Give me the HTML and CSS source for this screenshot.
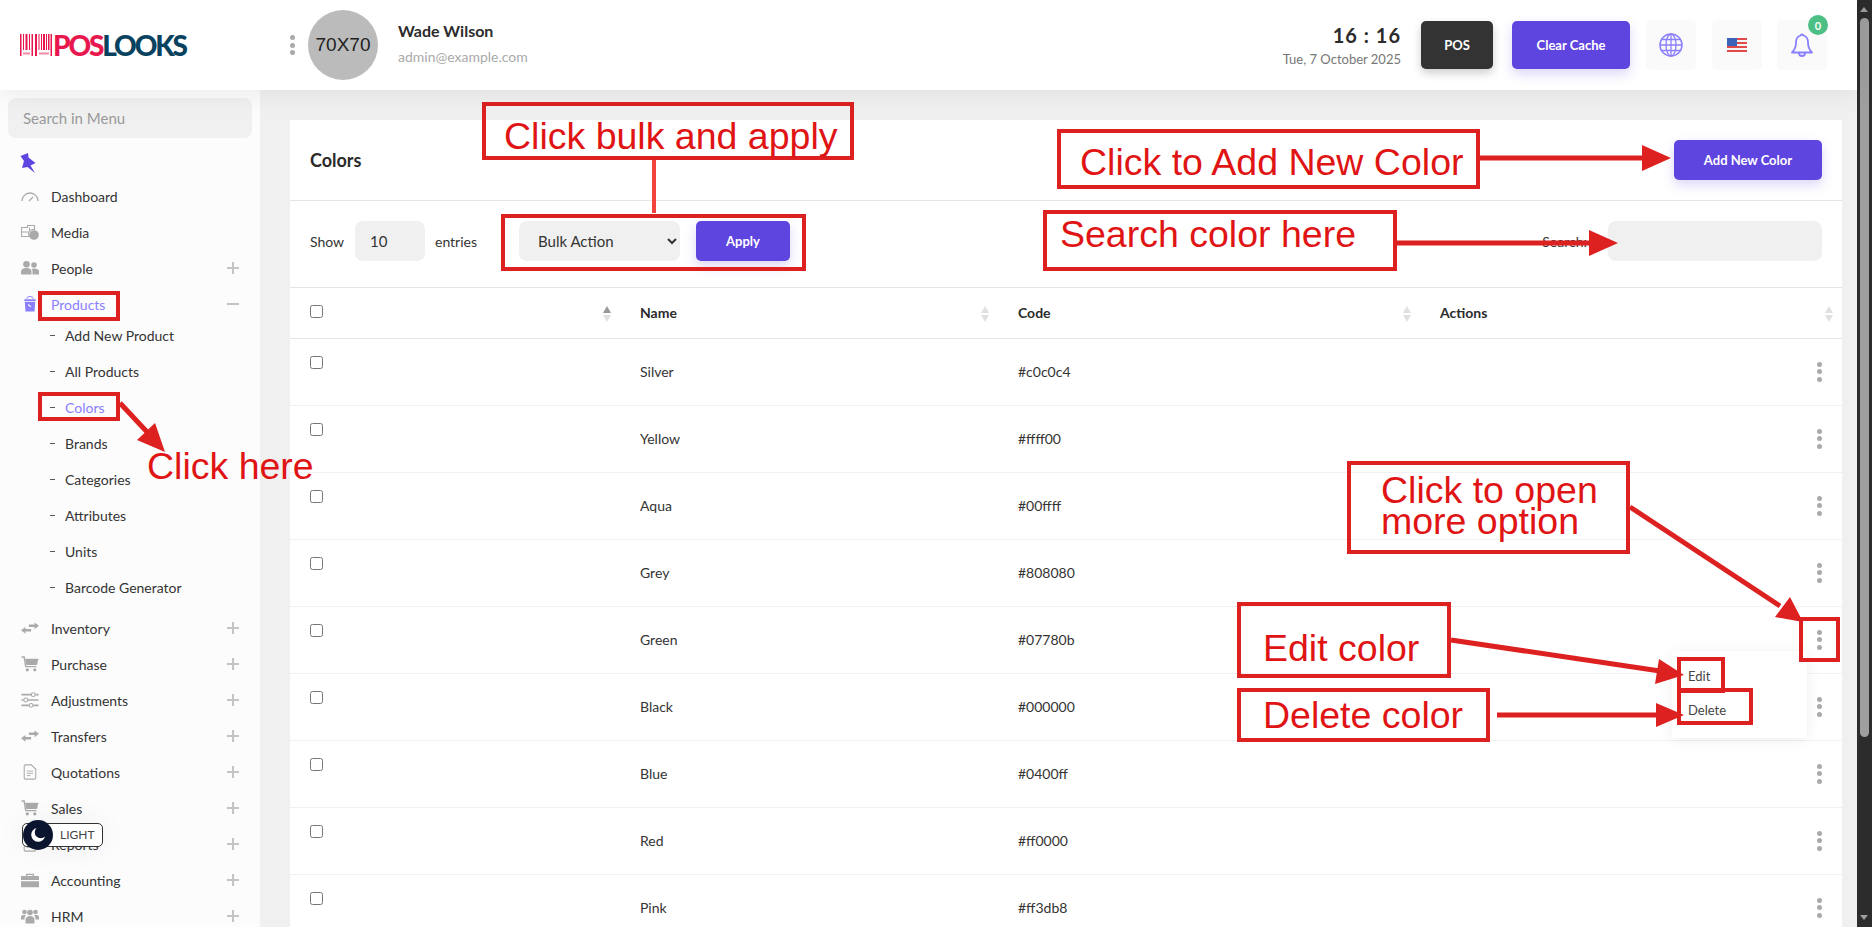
FILE: index.html
```html
<!DOCTYPE html>
<html lang="en">
<head>
<meta charset="utf-8">
<title>Colors</title>
<link rel="stylesheet" href="styles.css">
</head>
<body>
<svg class="defs" width="0" height="0" aria-hidden="true">
  <symbol id="i-gauge" viewBox="0 0 18 12"><path d="M1 11a8 8 0 0 1 16 0" fill="none" stroke="currentColor" stroke-width="1.300"/><path d="M8 11l4-4" stroke="currentColor" stroke-width="1.300"/></symbol>
  <symbol id="i-media" viewBox="0 0 18 16"><path d="M.5 3.500h6V1.500h7v4h-2.500a4 4 0 0 0-2 7H.5z" fill="none" stroke="currentColor" stroke-width="1.100"/><path d="M.5 8h7M8.500 3.500v3" stroke="currentColor"/><circle cx="13" cy="11" r="4.800" fill="currentColor"/></symbol>
  <symbol id="i-people" viewBox="0 0 18 15"><circle cx="5.500" cy="3.800" r="3.300" fill="currentColor"/><path d="M0 14v-3c0-2 2-3.500 5.500-3.500S10.500 9 10.500 11v3z" fill="currentColor"/><circle cx="13" cy="4.500" r="2.800" fill="currentColor"/><path d="M11.500 14v-3.500c0-.8-.5-1.500-1-2 2-1 7.500-.8 7.500 2.500v3z" fill="currentColor"/></symbol>
  <symbol id="i-bucket" viewBox="0 0 13 17"><path d="M3 3a3.500 2.500 0 0 1 7 0" fill="none" stroke="currentColor"/><path d="M.5 3.500h12v2H.5zM1 6.500h11l-.7 10H1.700z" fill="currentColor"/><path d="M4.500 9l3 2.500" stroke="#fff" stroke-width="1.200"/></symbol>
  <symbol id="i-swap" viewBox="0 0 16 11"><path d="M0 7.500L4 4.500V6.300H9V8.700H4V10.500z" fill="currentColor"/><path d="M16 3.500L12 .5V2.300H7V4.700H12V6.500z" fill="currentColor"/></symbol>
  <symbol id="i-cart" viewBox="0 0 16 15"><path d="M0 1h2.500l1.500 9h10" fill="none" stroke="currentColor" stroke-width="1.300"/><path d="M3.500 2.500H16l-1.500 6H4.500z" fill="currentColor"/><circle cx="5.500" cy="13" r="1.500" fill="currentColor"/><circle cx="12.500" cy="13" r="1.500" fill="currentColor"/></symbol>
  <symbol id="i-sliders" viewBox="0 0 16 15"><path d="M0 2.500h9M13 2.500h3M0 7.500h2M6 7.500h10M0 12.500h7M11 12.500h5" stroke="currentColor" stroke-width="1.500"/><circle cx="11" cy="2.500" r="1.800" fill="none" stroke="currentColor"/><circle cx="4" cy="7.500" r="1.800" fill="none" stroke="currentColor"/><circle cx="9" cy="12.500" r="1.800" fill="none" stroke="currentColor"/></symbol>
  <symbol id="i-file" viewBox="0 0 15 18"><path d="M1 2.500A1.500 1.500 0 0 1 2.500 1H9l5 5v9.500a1.500 1.500 0 0 1-1.500 1.500h-10A1.500 1.500 0 0 1 1 15.500z" fill="none" stroke="currentColor" stroke-width="1.200"/><path d="M4 8h7M4 10.500h7M4 13h4" stroke="currentColor" stroke-width="1"/></symbol>
  <symbol id="i-case" viewBox="0 0 16 13"><path d="M5 3V1.500h6V3" fill="none" stroke="currentColor" stroke-width="1.200"/><path d="M0 3h16v3.500H0zM0 7.500h16V13H0z" fill="currentColor"/></symbol>
  <symbol id="i-group" viewBox="0 0 18 15"><circle cx="9" cy="4" r="2.800" fill="currentColor"/><circle cx="3.500" cy="3.500" r="2.300" fill="currentColor"/><circle cx="14.500" cy="3.500" r="2.300" fill="currentColor"/><path d="M4.500 15v-3.500C4.500 9 6.500 7.500 9 7.500s4.500 1.500 4.500 4V15z" fill="currentColor"/><path d="M0 11V8.500C0 7 1.500 6.500 3.500 6.500c.5 0 1 0 1.300.2C3.800 8 3.500 9.500 3.500 11zM18 11V8.500c0-1.500-1.500-2-3.500-2-.5 0-1 0-1.300.2 1 1.300 1.300 2.800 1.300 4.300z" fill="currentColor"/></symbol>
</svg>

<div class="app">
  <div class="page">
    <header class="topbar">
      <div class="logo">
        <svg class="logo-bars" viewBox="0 0 32 22" aria-hidden="true">
          <path d="M0 0h1.500v22H0zM3 0h1v16H3zM5.500 0h2v16h-2zM9 0h1v16H9zM11.500 0h1.500v22h-1.500zM15 0h2v22h-2zM18.500 0h1v16h-1zM21 0h1v16h-1zM23 0h2v16h-2zM26 0h1v16h-1zM28 0h1.500v16H28zM30.500 0h1.500v22h-1.500z" fill="#e8184f"/>
          <path d="M3 18.500h7v2H3zM19 18.500h10v2H19z" fill="#f08aa6"/>
        </svg>
        <span class="logo-pos">POS</span><span class="logo-looks">LOOKS</span>
      </div>
      <button class="kebab topbar-kebab" aria-label="Menu"><i></i><i></i><i></i></button>
      <div class="avatar">70X70</div>
      <div class="user">
        <div class="user-name">Wade Wilson</div>
        <div class="user-mail">admin@example.com</div>
      </div>
      <div class="clock">
        <div class="clock-time">16 : 16</div>
        <div class="clock-date">Tue, 7 October 2025</div>
      </div>
      <button class="btn btn-dark">POS</button>
      <button class="btn btn-primary btn-cache">Clear Cache</button>
      <div class="tool">
        <svg class="tool-icon" viewBox="0 0 24 24" aria-hidden="true"><circle cx="12" cy="12" r="11" fill="none" stroke="currentColor" stroke-width="1.500"/><ellipse cx="12" cy="12" rx="5" ry="11" fill="none" stroke="currentColor" stroke-width="1.300"/><path d="M1 12h22M2.500 6.500h19M2.500 17.500h19M12 1v22" stroke="currentColor" stroke-width="1.300"/></svg>
      </div>
      <div class="tool">
        <svg class="flag" viewBox="0 0 20 14" aria-hidden="true"><rect width="20" height="14" fill="#f4f4f4"/><path d="M0 0h20v2H0zM0 4h20v2H0zM0 8h20v2H0zM0 12h20v2H0z" fill="#e04a4a"/><rect width="10" height="8" fill="#3a62b8"/></svg>
      </div>
      <div class="tool tool-bell">
        <svg class="tool-icon" viewBox="0 0 24 24" aria-hidden="true"><path d="M12 1.500a2 2 0 0 0-1.500 1C7 3.500 6 6.500 6 9.500c0 5-1.500 7.500-4 10h20c-2.500-2.500-4-5-4-10 0-3-1-6-4.500-7a2 2 0 0 0-1.500-1z" fill="none" stroke="currentColor" stroke-width="1.800" stroke-linejoin="round"/><path d="M9 20a3 3 0 0 0 6 0" fill="none" stroke="currentColor" stroke-width="1.800"/></svg>
        <span class="badge">0</span>
      </div>
    </header>

    <div class="body">
      <aside class="sidebar">
        <div class="menu-search">Search in Menu</div>
        <svg class="pin" viewBox="0 0 16 20" aria-hidden="true"><path d="M.5 3L8 0l.5 4.500 7 5.500-5 2.500L15 20l-7.500-6L2 15l2-7z" fill="#5d45e0"/></svg>
        <nav class="menu">
          <a class="item"><svg class="ico"><use href="#i-gauge"/></svg>Dashboard</a>
          <a class="item"><svg class="ico"><use href="#i-media"/></svg>Media</a>
          <a class="item has-sub"><svg class="ico"><use href="#i-people"/></svg>People</a>
          <a class="item open active"><svg class="ico"><use href="#i-bucket"/></svg>Products</a>
          <div class="sub">
            <a class="sub-item">Add New Product</a>
            <a class="sub-item">All Products</a>
            <a class="sub-item active">Colors</a>
            <a class="sub-item">Brands</a>
            <a class="sub-item">Categories</a>
            <a class="sub-item">Attributes</a>
            <a class="sub-item">Units</a>
            <a class="sub-item">Barcode Generator</a>
          </div>
          <a class="item has-sub"><svg class="ico"><use href="#i-swap"/></svg>Inventory</a>
          <a class="item has-sub"><svg class="ico"><use href="#i-cart"/></svg>Purchase</a>
          <a class="item has-sub"><svg class="ico"><use href="#i-sliders"/></svg>Adjustments</a>
          <a class="item has-sub"><svg class="ico"><use href="#i-swap"/></svg>Transfers</a>
          <a class="item has-sub"><svg class="ico"><use href="#i-file"/></svg>Quotations</a>
          <a class="item has-sub"><svg class="ico"><use href="#i-cart"/></svg>Sales</a>
          <a class="item has-sub"><svg class="ico"><use href="#i-file"/></svg>Reports</a>
          <a class="item has-sub"><svg class="ico"><use href="#i-case"/></svg>Accounting</a>
          <a class="item has-sub"><svg class="ico"><use href="#i-group"/></svg>HRM</a>
        </nav>
      </aside>

      <main class="main">
        <section class="card">
          <div class="card-head">
            <h1 class="card-title">Colors</h1>
            <button class="btn btn-primary btn-add">Add New Color</button>
          </div>
          <div class="filters">
            <span class="show-label">Show</span>
            <div class="len-input">10</div>
            <span class="ent-label">entries</span>
            <select class="bulk"><option>Bulk Action</option></select>
            <button class="btn btn-primary btn-apply">Apply</button>
            <span class="search-label">Search:</span>
            <div class="search-input"></div>
          </div>
          <table class="table">
            <colgroup><col class="c1"><col class="c2"><col class="c3"><col class="c4"></colgroup>
            <thead>
              <tr>
                <th class="check"><input type="checkbox"><span class="sort sort-asc"></span></th>
                <th>Name<span class="sort"></span></th>
                <th>Code<span class="sort"></span></th>
                <th>Actions<span class="sort"></span></th>
              </tr>
            </thead>
            <tbody>
              <tr><td class="check"><input type="checkbox"></td><td>Silver</td><td>#c0c0c4</td><td class="act"><button class="kebab" aria-label="Options"><i></i><i></i><i></i></button></td></tr>
              <tr><td class="check"><input type="checkbox"></td><td>Yellow</td><td>#ffff00</td><td class="act"><button class="kebab" aria-label="Options"><i></i><i></i><i></i></button></td></tr>
              <tr><td class="check"><input type="checkbox"></td><td>Aqua</td><td>#00ffff</td><td class="act"><button class="kebab" aria-label="Options"><i></i><i></i><i></i></button></td></tr>
              <tr><td class="check"><input type="checkbox"></td><td>Grey</td><td>#808080</td><td class="act"><button class="kebab" aria-label="Options"><i></i><i></i><i></i></button></td></tr>
              <tr><td class="check"><input type="checkbox"></td><td>Green</td><td>#07780b</td><td class="act"><button class="kebab" aria-label="Options"><i></i><i></i><i></i></button></td></tr>
              <tr><td class="check"><input type="checkbox"></td><td>Black</td><td>#000000</td><td class="act"><button class="kebab" aria-label="Options"><i></i><i></i><i></i></button></td></tr>
              <tr><td class="check"><input type="checkbox"></td><td>Blue</td><td>#0400ff</td><td class="act"><button class="kebab" aria-label="Options"><i></i><i></i><i></i></button></td></tr>
              <tr><td class="check"><input type="checkbox"></td><td>Red</td><td>#ff0000</td><td class="act"><button class="kebab" aria-label="Options"><i></i><i></i><i></i></button></td></tr>
              <tr><td class="check"><input type="checkbox"></td><td>Pink</td><td>#ff3db8</td><td class="act"><button class="kebab" aria-label="Options"><i></i><i></i><i></i></button></td></tr>
            </tbody>
          </table>
        </section>
      </main>
    </div>
  </div>

  <div class="scrollbar">
    <span class="sb-up"></span>
    <span class="sb-thumb"></span>
    <span class="sb-down"></span>
  </div>
</div>

<div class="toggle"><span class="toggle-knob"><svg viewBox="0 0 16 16" aria-hidden="true"><path d="M6.500 1a7 7 0 1 0 8.500 8.500A6 6 0 0 1 6.500 1z" fill="#fff"/></svg></span><span class="toggle-text">LIGHT</span></div>

<div class="popup"><div class="popup-item">Edit</div><div class="popup-item">Delete</div></div>

<div class="mark mark-products"></div>
<div class="mark mark-colors"></div>
<div class="mark mark-bulk"></div>
<div class="mark mark-kebab"></div>
<div class="mark mark-edit"></div>
<div class="mark mark-delete"></div>

<div class="note note-bulk">Click bulk and apply</div>
<div class="note note-add">Click to Add New Color</div>
<div class="note note-search">Search color here</div>
<div class="note note-more">Click to open<br>more option</div>
<div class="note note-edit">Edit color</div>
<div class="note note-del">Delete color</div>
<div class="note-free">Click here</div>

<svg class="arrows" viewBox="0 0 1872 927" aria-hidden="true">
  <path class="conn" d="M654 160V213"/>
  <path class="line" d="M1480 158H1645"/>
  <path class="head" d="M1671 158L1642 145V171z"/>
  <path class="line" d="M1397 243H1592"/>
  <path class="head" d="M1618 243L1589 230V256z"/>
  <path class="line" d="M120 403L148 433"/>
  <path class="head" d="M165 452L137 440L155 423z"/>
  <path class="line" d="M1630 507L1780 606"/>
  <path class="head" d="M1803 622L1775 617L1790 597z"/>
  <path class="line" d="M1451 640L1660 671"/>
  <path class="head" d="M1684 675L1655 684L1659 659z"/>
  <path class="line" d="M1497 715H1660"/>
  <path class="head" d="M1684 715L1656 703V727z"/>
</svg>
</body>
</html>
```
FILE: styles.css
```css
* { box-sizing: border-box; }
html, body { margin: 0; height: 100%; overflow: hidden; }
body { font-family: Lato, "Noto Sans", sans-serif; font-size: 14px; color: #343434; background: #f0f0f0; }
.defs { position: absolute; }
a { color: inherit; text-decoration: none; }

.app { display: flex; height: 927px; }
.page { flex: 1; min-width: 0; display: flex; flex-direction: column; }

/* top bar */
.topbar { position: relative; z-index: 2; height: 90px; flex: none; display: flex; align-items: center; background: #fff; box-shadow: 0 0 30px rgba(0,0,0,.09); }
.logo { width: 260px; padding-left: 20px; display: flex; align-items: center; flex: none; font-weight: 900; font-size: 28px; letter-spacing: -2.150px; line-height: 1; }
.logo-bars { width: 32px; height: 22px; margin-right: 1px; flex: none; }
.logo-pos { color: #e8184f; }
.logo-looks { color: #08425f; }
.topbar-kebab { margin-left: 29px; }
.avatar { width: 70px; height: 70px; margin-left: 13px; border-radius: 50%; background: #bbb; color: #222; font-size: 19px; font-family: "Liberation Sans", sans-serif; display: flex; align-items: center; justify-content: center; flex: none; }
.user { margin-left: 20px; margin-top: -4px; }
.user-name { font-size: 16px; font-weight: 700; color: #2b2b2b; line-height: 20px; }
.user-mail { margin-top: 7px; font-size: 14px; color: #aaa; line-height: 18px; }
.clock { margin-left: auto; text-align: right; margin-right: 20px; }
.clock-time { font-size: 20px; font-weight: 700; letter-spacing: 1px; line-height: 26px; color: #2b2b2b; }
.clock-date { margin-top: 2px; font-size: 13px; color: #777; line-height: 18px; }
.btn { border: 0; border-radius: 5px; color: #fff; font: 700 13px Lato, sans-serif; display: flex; align-items: center; justify-content: center; padding: 0; flex: none; }
.btn-dark { width: 72px; height: 48px; background: #333; box-shadow: 0 4px 10px rgba(0,0,0,.2); }
.btn-primary { background: #5f45e0; box-shadow: 0 5px 12px rgba(95,69,224,.22); }
.btn-cache { width: 118px; height: 48px; margin-left: 19px; }
.tool { position: relative; width: 50px; height: 50px; margin-left: 16px; border-radius: 5px; background: #fafafa; display: flex; align-items: center; justify-content: center; color: #8a80ff; flex: none; }
.tool-bell { margin-left: 15px; margin-right: 30px; }
.tool-icon { width: 24px; height: 24px; }
.flag { width: 20px; height: 14px; }
.badge { position: absolute; top: -5px; right: -1px; width: 20px; height: 20px; border-radius: 50%; background: #4cbf85; color: #fff; font-size: 11px; font-weight: 700; display: flex; align-items: center; justify-content: center; }

.kebab { border: 0; background: none; padding: 0; width: 6px; display: inline-flex; flex-direction: column; gap: 2.500px; align-items: center; flex: none; }
.kebab i { width: 5px; height: 5px; border-radius: 50%; background: #aaa; display: block; }

/* layout */
.body { flex: 1; min-height: 0; display: flex; }
.sidebar { width: 260px; flex: none; background: #fcfcfc; padding: 8px 8px 0; overflow: hidden; }
.menu-search { height: 40px; border-radius: 8px; background: #f0f0f0; color: #999; font-size: 15px; padding-left: 15px; display: flex; align-items: center; }
.pin { display: block; width: 16px; height: 20px; margin: 15px 0 5px 12px; }
.menu { margin-left: 13px; margin-right: 13px; }
.item { position: relative; height: 36px; display: flex; align-items: center; color: #343434; }
.ico { width: 18px; height: 16px; margin-right: 12px; color: #aaa; flex: none; }
.item.active { color: #8a80ff; }
.item.active .ico { color: #8a80ff; }
.has-sub::after, .open::after { content: ""; position: absolute; right: 0; top: 17px; width: 12px; height: 2px; background: #c4c4c4; }
.has-sub::before { content: ""; position: absolute; right: 5px; top: 12px; width: 2px; height: 12px; background: #c4c4c4; }
.sub { margin: -5px 0 5px; }
.sub-item { height: 36px; display: flex; align-items: center; padding-left: 29px; }
.sub-item::before { content: ""; width: 5px; height: 1px; background: #555; margin-right: 10px; }
.sub-item.active { color: #8a80ff; }

/* card */
.main { flex: 1; min-width: 0; padding: 30px 15px 0 30px; overflow: hidden; }
.card { background: #fff; }
.card-head { height: 81px; display: flex; align-items: center; justify-content: space-between; padding: 0 20px 1px; border-bottom: 1px solid #e4e6ec; }
.card-title { margin: 0; font-size: 18px; font-weight: 700; color: #2b2b2b; }
.btn-add { width: 148px; height: 40px; }
.filters { height: 87px; display: flex; align-items: center; padding: 0 20px 6px; border-bottom: 1px solid #e4e6ec; }
.show-label { width: 45px; }
.len-input { width: 70px; height: 40px; border-radius: 8px; background: #f0f0f0; font-size: 15px; padding-left: 15px; display: flex; align-items: center; }
.ent-label { width: 44px; margin-left: 10px; }
.bulk { width: 161px; height: 40px; margin-left: 40px; border: 0; border-radius: 8px; background: #f0f0f0; font: 15px Lato, sans-serif; color: #343434; padding: 0 15px; }
.btn-apply { width: 94px; height: 40px; margin-left: 16px; }
.search-label { margin-left: auto; }
.search-input { width: 214px; height: 40px; margin-left: 21px; border-radius: 8px; background: #f0f0f0; }

/* table */
.table { width: 100%; border-collapse: collapse; table-layout: fixed; }
.c1 { width: 330px; } .c2 { width: 378px; } .c3 { width: 422px; }
.table th { position: relative; height: 50px; padding: 0 20px; text-align: left; font-weight: 700; color: #2b2b2b; border-bottom: 1px solid #e4e6ec; }
.table td { height: 67px; padding: 0 20px; border-bottom: 1px solid #f1f1f3; }
.table input { display: block; width: 13px; height: 13px; margin: 0; }
.table .check { vertical-align: top; padding-top: 17px; }
.act { text-align: right; padding-right: 20px !important; }
.act .kebab { vertical-align: middle; }
.sort { position: absolute; right: 9px; top: 18px; width: 8px; height: 16px; }
.sort::before, .sort::after { content: ""; position: absolute; left: 0; border-left: 4px solid transparent; border-right: 4px solid transparent; }
.sort::before { top: 0; border-bottom: 7px solid #e0e0e0; }
.sort::after { bottom: 0; border-top: 7px solid #e0e0e0; }
.sort-asc::before { border-bottom-color: #999; }
.check .sort { right: 9px; }

/* scrollbar */
.scrollbar { position: relative; width: 15px; flex: none; background: #2c2c2c; }
.sb-thumb { position: absolute; left: 3px; top: 18px; width: 9px; height: 719px; border-radius: 5px; background: #9f9f9f; }
.sb-up, .sb-down { position: absolute; left: 3px; border-left: 4.500px solid transparent; border-right: 4.500px solid transparent; }
.sb-up { top: 7px; border-bottom: 5px solid #9f9f9f; }
.sb-down { bottom: 7px; border-top: 5px solid #9f9f9f; }

/* floating */
.toggle { position: absolute; left: 22px; top: 823px; width: 81px; height: 24px; border: 1px solid #333; border-radius: 5px; background: #fff; box-shadow: 0 0 30px rgba(0,0,0,.06); }
.toggle-knob { position: absolute; left: 0; top: -4px; width: 30px; height: 30px; border-radius: 50%; background: #0b1530; display: flex; align-items: center; justify-content: center; }
.toggle-knob svg { width: 16px; height: 16px; }
.toggle-text { position: absolute; left: 37px; top: 3px; font-size: 12px; line-height: 16px; color: #444; }
.popup { position: absolute; left: 1672px; top: 651px; width: 135px; height: 87px; padding-top: 8px; background: #fff; box-shadow: 0 2px 14px rgba(0,0,0,.07); }
.popup-item { height: 34px; padding-left: 16px; font-size: 13px; display: flex; align-items: center; color: #444; }

.mark { position: absolute; border: 4px solid #dd2020; }
.mark-products { left: 38px; top: 291px; width: 82px; height: 30px; }
.mark-colors { left: 38px; top: 392px; width: 82px; height: 29px; }
.mark-bulk { left: 501px; top: 214px; width: 305px; height: 57px; }
.mark-kebab { left: 1799px; top: 617px; width: 41px; height: 45px; }
.mark-edit { left: 1677px; top: 657px; width: 48px; height: 36px; }
.mark-delete { left: 1677px; top: 688px; width: 76px; height: 37px; }

.note { position: absolute; border: 4px solid #dd2020; font-family: "Liberation Sans", sans-serif; font-size: 37.500px; color: #e01414; line-height: 1; white-space: nowrap; }
.note-bulk { left: 482px; top: 102px; width: 372px; height: 58px; padding: 12px 0 0 18px; }
.note-add { left: 1057px; top: 129px; width: 423px; height: 60px; padding: 11px 0 0 19px; }
.note-search { left: 1043px; top: 210px; width: 354px; height: 61px; padding: 2px 0 0 13px; }
.note-more { left: 1347px; top: 461px; width: 283px; height: 93px; line-height: 31px; padding: 10px 0 0 30px; }
.note-edit { left: 1237px; top: 602px; width: 214px; height: 76px; padding: 24px 0 0 22px; }
.note-del { left: 1237px; top: 688px; width: 253px; height: 54px; padding: 5px 0 0 22px; }
.note-free { position: absolute; left: 147px; top: 446px; font: 37.500px/1.1 "Liberation Sans", sans-serif; color: #e01414; white-space: nowrap; }

.arrows { position: absolute; left: 0; top: 0; width: 1872px; height: 927px; pointer-events: none; }
.line { fill: none; stroke: #dd2020; stroke-width: 5; }
.conn { fill: none; stroke: #f4433c; stroke-width: 4; }
.head { fill: #dd2020; }
```
